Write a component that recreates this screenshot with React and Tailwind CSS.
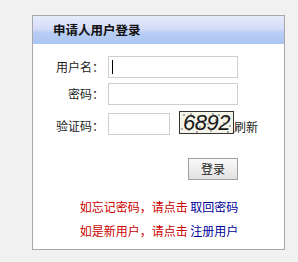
import React from 'react';

const dots = [
  [4, 3], [9, 18], [14, 6], [20, 15], [25, 4], [31, 19], [36, 8], [41, 17], [46, 5], [50, 14],
  [7, 11], [17, 20], [28, 12], [39, 3], [48, 20], [2, 17], [22, 9], [33, 2], [44, 11], [11, 2],
];

const App = () => {
  return (
    <div className="w-[298px] h-[262px] bg-[#f1f1f1] pt-[15px] pl-[32px] font-['Noto_Sans_CJK_SC',sans-serif]">
      <div className="w-[253px] h-[235px] bg-white border border-[#a8a8a8]">
        <div className="h-[28px] flex items-center pl-[20px] bg-[linear-gradient(to_bottom,#e4ecfc_0%,#d6dcf8_45%,#b8cdf4_60%,#a9c6f2_100%)]">
          <span className="text-[12.5px] font-bold text-[#111]">申请人用户登录</span>
        </div>

        <div className="grid grid-cols-[71px_auto] gap-x-[4px] mt-[12px] text-[12px] text-[#222] leading-none">
          <div className="h-[22px] flex items-center justify-end">用户名：</div>
          <div className="w-[130px] h-[22px] border border-[#cfcfcf] flex items-center pl-[3px]">
            <span className="w-px h-[14px] bg-black" />
          </div>

          <div className="h-[22px] mt-[5px] flex items-center justify-end">密码：</div>
          <div className="w-[130px] h-[22px] mt-[5px] border border-[#cfcfcf]" />

          <div className="h-[26px] mt-[3px] flex items-end pb-[2px] justify-end">验证码：</div>
          <div className="mt-[3px] flex items-end gap-[9px]">
            <div className="w-[62px] h-[22px] border border-[#cfcfcf] mb-[-1px]" />
            <div className="flex items-end">
              <div className="relative w-[55px] h-[23px] border border-[#333] bg-[#f4f4e8] flex items-center justify-center overflow-hidden">
                <svg className="absolute inset-0" width="55" height="23">
                  {dots.map(([x, y], i) => (
                    <circle key={i} cx={x} cy={y} r="0.8" fill="#556" />
                  ))}
                </svg>
                <span className="relative italic text-[22px] text-[#1a1a1a] font-['Liberation_Sans',sans-serif] tracking-[-0.5px]">6892</span>
              </div>
              <span className="text-[12px] pb-[1px]">刷新</span>
            </div>
          </div>
        </div>

        <div className="flex justify-end pr-[46px] mt-[24px]">
          <button className="w-[50px] h-[22px] border border-[#a0a0a0] bg-[linear-gradient(to_bottom,#fafafa,#e2e2e2)] text-[12px] text-[#222]">
            登录
          </button>
        </div>

        <div className="flex flex-col items-center mt-[21px] gap-[12px] text-[12px] leading-none pl-[1px]">
          <div>
            <span className="text-[#cc0000]">如忘记密码，请点击</span>{' '}
            <span className="text-[#000099]">取回密码</span>
          </div>
          <div>
            <span className="text-[#cc0000]">如是新用户，请点击</span>{' '}
            <span className="text-[#000099]">注册用户</span>
          </div>
        </div>
      </div>
    </div>
  );
};

export default App;
